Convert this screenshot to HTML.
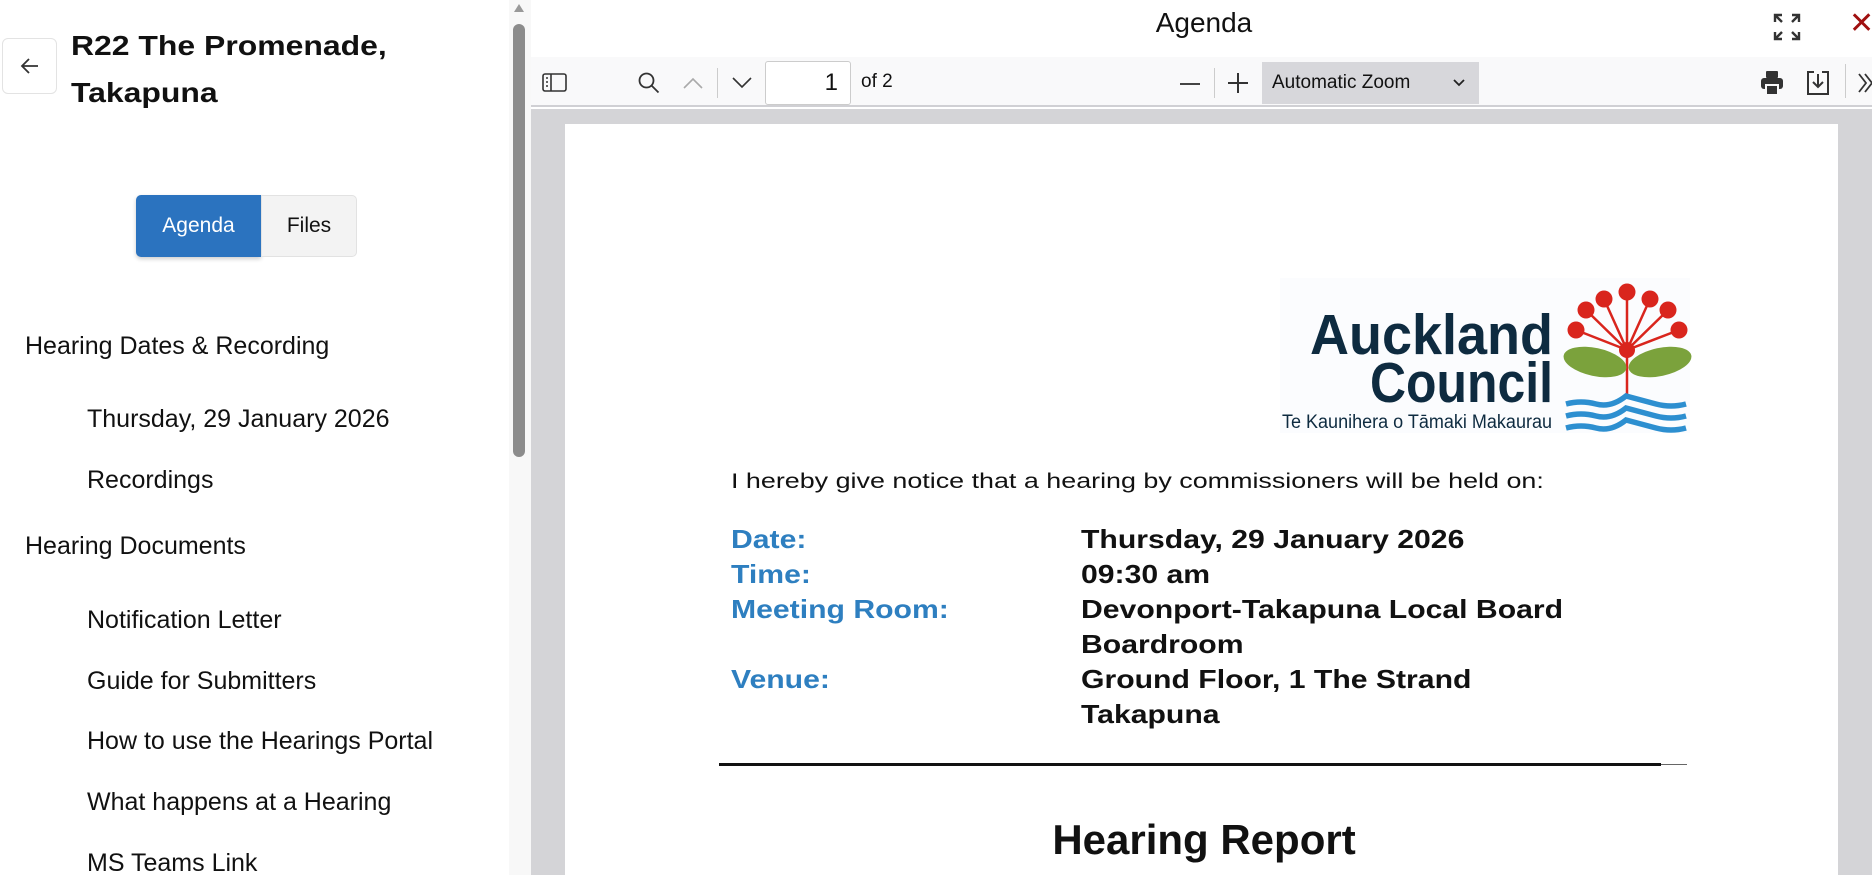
<!DOCTYPE html>
<html><head><meta charset="utf-8"><style>
*{margin:0;padding:0;box-sizing:border-box}
body{width:1872px;height:875px;overflow:hidden;background:#fff;font-family:"Liberation Sans",Arial,sans-serif;position:relative;color:#111}
.a{position:absolute;white-space:nowrap}
.nav{font-size:25px;color:#111}
.pd{font-size:26px;font-weight:bold;line-height:35px;transform:scaleX(1.16);transform-origin:0 0}
.lb{color:#2e7fc0}
</style></head><body>
<!-- left sidebar -->
<div class="a" style="left:2px;top:38px;width:55px;height:56px;border:1px solid #e3e3e3;border-radius:6px"></div>
<svg class="a" style="left:18px;top:56px" width="24" height="20" viewBox="0 0 24 20"><path d="M20 10H4M11 3L4 10l7 7" fill="none" stroke="#333" stroke-width="1.8"/></svg>
<div class="a" style="left:71px;top:22px;font-size:28px;font-weight:bold;line-height:47px;transform:scaleX(1.14);transform-origin:0 0">R22 The Promenade,<br>Takapuna</div>
<div class="a" style="left:136px;top:195px;width:125px;height:62px;background:#2b73bf;border-radius:5px 0 0 5px;color:#fff;font-size:21px;line-height:62px;text-align:center;box-shadow:0 2px 4px rgba(0,0,0,.2)">Agenda</div>
<div class="a" style="left:261px;top:195px;width:96px;height:62px;background:#f3f3f3;border:1px solid #e2e2e2;border-radius:0 5px 5px 0;font-size:21px;line-height:60px;text-align:center">Files</div>
<div class="a nav" style="left:25px;top:332px">Hearing Dates &amp; Recording</div>
<div class="a nav" style="left:87px;top:405px">Thursday, 29 January 2026</div>
<div class="a nav" style="left:87px;top:466px">Recordings</div>
<div class="a nav" style="left:25px;top:532px">Hearing Documents</div>
<div class="a nav" style="left:87px;top:606px">Notification Letter</div>
<div class="a nav" style="left:87px;top:667px">Guide for Submitters</div>
<div class="a nav" style="left:87px;top:727px">How to use the Hearings Portal</div>
<div class="a nav" style="left:87px;top:788px">What happens at a Hearing</div>
<div class="a nav" style="left:87px;top:849px">MS Teams Link</div>
<!-- scrollbar -->
<div class="a" style="left:509px;top:0;width:22px;height:875px;background:#f8f8f8"></div>
<div class="a" style="left:514px;top:4px;width:0;height:0;border-left:5px solid transparent;border-right:5px solid transparent;border-bottom:8px solid #999"></div>
<div class="a" style="left:513px;top:24px;width:12px;height:433px;background:#8c8c8c;border-radius:6px"></div>
<!-- header -->
<div class="a" style="left:1104px;top:7px;width:200px;text-align:center;font-size:28px">Agenda</div>
<svg class="a" style="left:1772px;top:12px" width="30" height="30" viewBox="0 0 30 30" fill="none" stroke="#333" stroke-width="2.4"><path d="M3 10V3h7M3 3l7 7M27 10V3h-7M27 3l-7 7M3 20v7h7M3 27l7-7M27 20v7h-7M27 27l-7-7"/></svg>
<div class="a" style="left:1849px;top:6px;font-size:30px;color:#a01010">✕</div>
<!-- toolbar -->
<div class="a" style="left:531px;top:57px;width:1341px;height:50px;background:#f9f9fa;border-bottom:2px solid #d0d0d4"></div>
<svg class="a" style="left:542px;top:73px" width="26" height="20" viewBox="0 0 26 20" fill="none" stroke="#333" stroke-width="1.6"><rect x="1" y="1" width="23" height="17" rx="2"/><path d="M9 1v17M4 5h2M4 9h2M4 13h2"/></svg>
<svg class="a" style="left:637px;top:71px" width="24" height="24" viewBox="0 0 24 24" fill="none" stroke="#333" stroke-width="1.8"><circle cx="9.5" cy="9.5" r="7"/><path d="M14.5 14.5l7 7"/></svg>
<svg class="a" style="left:682px;top:76px" width="22" height="14" viewBox="0 0 22 14" fill="none" stroke="#aaa" stroke-width="1.6"><path d="M2 12l9-9 9 9"/></svg>
<div class="a" style="left:717px;top:68px;width:1px;height:30px;background:#ccc"></div>
<svg class="a" style="left:731px;top:76px" width="22" height="14" viewBox="0 0 22 14" fill="none" stroke="#333" stroke-width="1.6"><path d="M2 2l9 9 9-9"/></svg>
<div class="a" style="left:765px;top:61px;width:86px;height:44px;background:#fff;border:1px solid #ccc;border-radius:3px;font-size:24px;line-height:42px;text-align:right;padding-right:12px">1</div>
<div class="a" style="left:861px;top:71px;font-size:19px">of 2</div>
<div class="a" style="left:1180px;top:83px;width:20px;height:2px;background:#444"></div>
<div class="a" style="left:1214px;top:68px;width:1px;height:30px;background:#ccc"></div>
<svg class="a" style="left:1227px;top:72px" width="22" height="22" viewBox="0 0 22 22" stroke="#333" stroke-width="2"><path d="M11 1v20M1 11h20"/></svg>
<div class="a" style="left:1262px;top:62px;width:217px;height:42px;background:#d7d7db;font-size:19px;line-height:42px;padding-left:10px">Automatic Zoom</div>
<svg class="a" style="left:1452px;top:78px" width="14" height="10" viewBox="0 0 14 10" fill="none" stroke="#222" stroke-width="1.8"><path d="M2 2l5 5 5-5"/></svg>
<svg class="a" style="left:1760px;top:70px" width="24" height="26" viewBox="0 0 24 26" fill="#333"><rect x="6" y="1" width="12" height="7" rx="1"/><rect x="1" y="8" width="22" height="11" rx="3"/><rect x="6" y="15" width="12" height="10" fill="#333" stroke="#f9f9fa" stroke-width="2"/></svg>
<svg class="a" style="left:1805px;top:70px" width="26" height="26" viewBox="0 0 26 26" fill="none" stroke="#333" stroke-width="2"><path d="M9 2H3v22h20V2h-6"/><path d="M13 4v12M8 12l5 5 5-5"/></svg>
<div class="a" style="left:1845px;top:64px;width:1px;height:34px;background:#ccc"></div>
<svg class="a" style="left:1857px;top:72px" width="15" height="22" viewBox="0 0 15 22" fill="none" stroke="#333" stroke-width="1.8"><path d="M2 2l7 9-7 9M8 2l7 9-7 9"/></svg>
<!-- viewer -->
<div class="a" style="left:531px;top:109px;width:1341px;height:766px;background:#d4d4d7"></div>
<div class="a" style="left:565px;top:124px;width:1273px;height:751px;background:#fff"></div>
<!-- logo -->
<svg class="a" style="left:1270px;top:270px" width="430" height="170" viewBox="0 0 430 170">
<rect x="10" y="8" width="410" height="155" fill="#fbfcfe"/>
<text x="283" y="84" text-anchor="end" font-family="Liberation Sans,Arial,sans-serif" font-weight="bold" font-size="57" fill="#0e2b40" textLength="243" lengthAdjust="spacingAndGlyphs">Auckland</text>
<text x="283" y="132" text-anchor="end" font-family="Liberation Sans,Arial,sans-serif" font-weight="bold" font-size="57" fill="#0e2b40" textLength="183" lengthAdjust="spacingAndGlyphs">Council</text>
<text x="12" y="158" font-family="Liberation Sans,Arial,sans-serif" font-size="19" fill="#0e2b40" textLength="270" lengthAdjust="spacingAndGlyphs">Te Kaunihera o Tāmaki Makaurau</text>
<g stroke="#d9251d" stroke-width="2.5">
<path d="M357 80V128M357 80L306 60M357 80L316 40M357 80L334 29M357 80V22M357 80L380 29M357 80L398 40M357 80L409 60"/></g>
<g fill="#d9251d"><circle cx="357" cy="80" r="8"/><circle cx="306" cy="60" r="8.5"/><circle cx="316" cy="40" r="8.5"/><circle cx="334" cy="29" r="8.5"/><circle cx="357" cy="22" r="8.5"/><circle cx="380" cy="29" r="8.5"/><circle cx="398" cy="40" r="8.5"/><circle cx="409" cy="60" r="8.5"/></g>
<ellipse cx="325" cy="92" rx="32" ry="14" transform="rotate(12 325 92)" fill="#7ba23c"/>
<ellipse cx="390" cy="92" rx="32" ry="14" transform="rotate(-12 390 92)" fill="#7ba23c"/>
<g fill="none" stroke="#2d8fd0" stroke-width="5.5">
<path d="M296 134q15-4 30 0t30-8q15 4 30 8t30 0"/><path d="M296 146q15-4 30 0t30-8q15 4 30 8t30 0"/><path d="M296 158q15-4 30 0t30-8q15 4 30 8t30 0"/></g>
</svg>
<!-- document text -->
<div class="a" style="left:731px;top:470px;font-size:21px;transform:scaleX(1.28);transform-origin:0 0">I hereby give notice that a hearing by commissioners will be held on:</div>
<div class="a pd lb" style="left:731px;top:522px">Date:<br>Time:<br>Meeting Room:<br><br>Venue:</div>
<div class="a pd" style="left:1081px;top:522px">Thursday, 29 January 2026<br>09:30 am<br>Devonport-Takapuna Local Board<br>Boardroom<br>Ground Floor, 1 The Strand<br>Takapuna</div>
<div class="a" style="left:719px;top:763px;width:942px;height:3px;background:#111"></div>
<div class="a" style="left:1661px;top:764px;width:26px;height:1px;background:#666"></div>
<div class="a" style="left:1004px;top:816px;width:400px;text-align:center;font-size:42px;font-weight:bold">Hearing Report</div>
</body></html>
